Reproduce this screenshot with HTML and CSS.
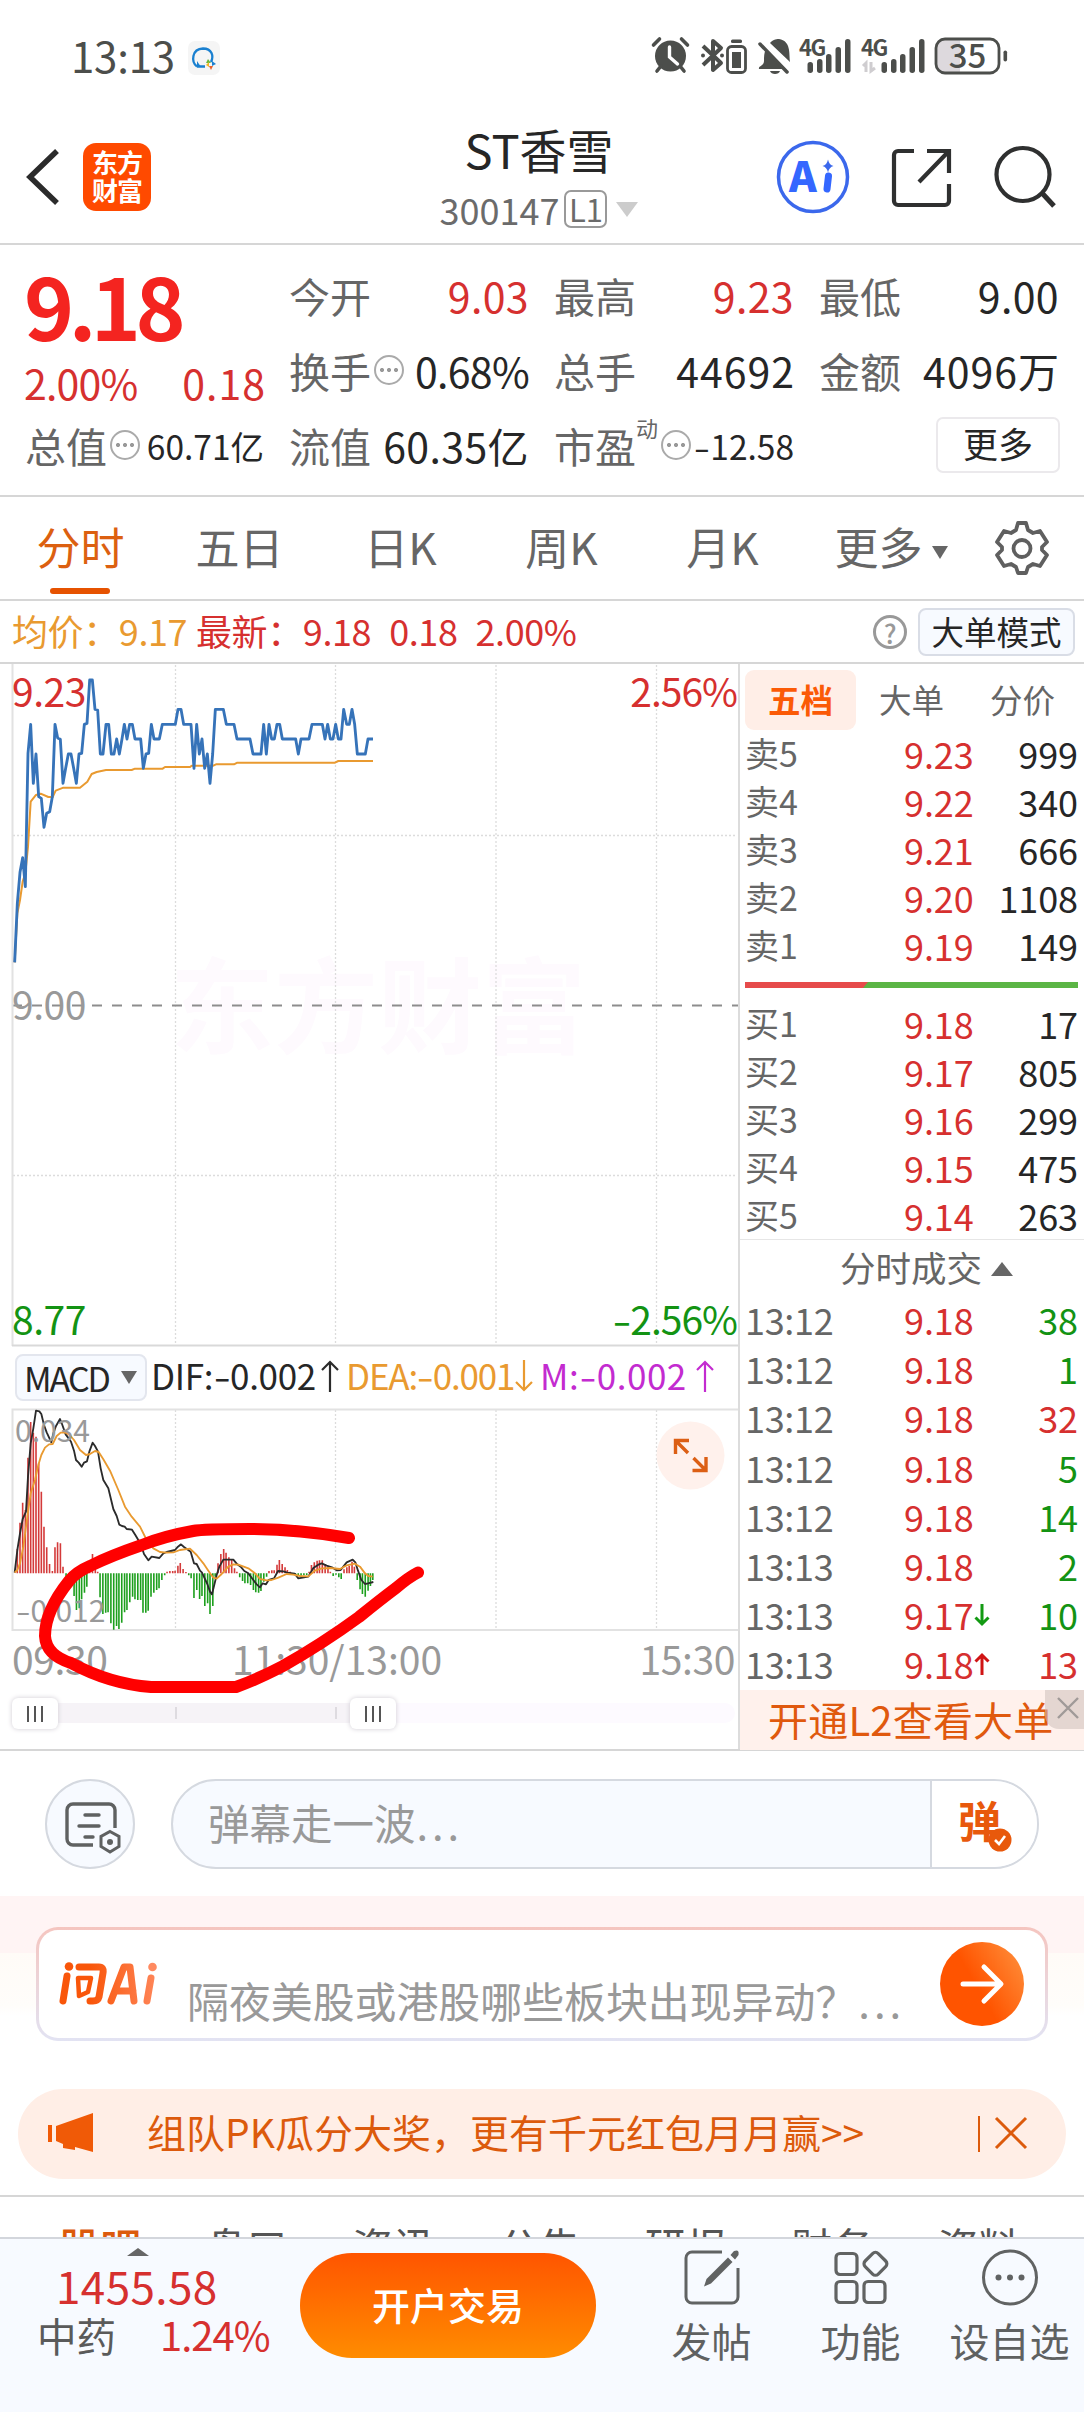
FILE: index.html
```html
<!DOCTYPE html>
<html lang="zh-CN">
<head>
<meta charset="utf-8">
<title>ST香雪 300147</title>
<link rel="stylesheet" href="styles.css">
</head>
<body>
<div class="app">

  <div class="statusbar">
    <span class="clock">13:13</span>
    <span class="chat-badge">
      <svg width="32" height="34" viewBox="0 0 32 34"><path d="M9 25.500 C3 21 3.500 8 15 7.500 C24 7.500 26 15 23 21 M9 25.500 H17" fill="none" stroke="#1a80d0" stroke-width="2.300"/><path d="M9 20v6h4z" fill="#1a80d0"/><path d="M20 18l3 4h-5z" fill="#6dbb3c"/><path d="M18 24l3-3v5z" fill="#f5b621"/><path d="M24 20l4 3-4 2z" fill="#1a80d0"/><path d="M21 25l4 0-2 4z" fill="#e8622a"/></svg>
    </span>
    <svg class="status-icons" width="380" height="46" viewBox="0 0 380 46">
      <g fill="#4c4e4b">
        <circle cx="20.500" cy="25" r="15.500"/>
        <path d="M11 35l-4 5M30 35l4 5M3.500 14l6-6M37.500 14l-6-6" stroke="#4c4e4b" stroke-width="3.600" stroke-linecap="round"/>
        <path d="M19.500 16v10l8 7" fill="none" stroke="#fff" stroke-width="3.400" stroke-linecap="round"/>
        <path d="M53 15l18 17-8 7V10l8 7L53 34" fill="none" stroke="#4c4e4b" stroke-width="4" stroke-linejoin="round"/>
        <circle cx="53" cy="24.500" r="2"/><circle cx="72" cy="24.500" r="2"/>
        <rect x="77.500" y="15.500" width="18" height="26" rx="4" fill="none" stroke="#4c4e4b" stroke-width="2.800"/>
        <rect x="82" y="21" width="9" height="16"/><rect x="81" y="8.500" width="11" height="3.500" rx="1.500"/>
        <path d="M116 18l19 20h-26c-1-3 5-3 5-8 0-5 0-8 2-12zM120 12c3-4 8-4 9-4 12 2 10 14 11 23z"/>
        <path d="M110 13l27 28" stroke="#4c4e4b" stroke-width="3.500" stroke-linecap="round"/><path d="M120 40h10c-1 4-9 4-10 0z"/>
        <rect x="157.500" y="31" width="5.500" height="11" rx="2.700"/><rect x="167" y="28" width="5.500" height="14" rx="2.700"/><rect x="176" y="23" width="5.500" height="19" rx="2.700"/><rect x="185.500" y="16" width="5.500" height="26" rx="2.700"/><rect x="195" y="8" width="5.500" height="34" rx="2.700"/>
        <rect x="231.500" y="31" width="5.500" height="11" rx="2.700"/><rect x="241" y="28" width="5.500" height="14" rx="2.700"/><rect x="250" y="23" width="5.500" height="19" rx="2.700"/><rect x="259.500" y="16" width="5.500" height="26" rx="2.700"/><rect x="269" y="8" width="5.500" height="34" rx="2.700"/>
      </g>
      <path d="M216 41V32l-3 3M221 31v9l4-3" fill="none" stroke="#cfcdd0" stroke-width="3"/>
      <path d="M294 8h16v34h-16a8 8 0 0 1-8-8V16a8 8 0 0 1 8-8z" fill="#ddd9dd"/>
      <rect x="286" y="8" width="63" height="34" rx="9" fill="none" stroke="#4c4e4b" stroke-width="2.800"/>
      <rect x="353.500" y="19.500" width="3.600" height="11" rx="1.800" fill="#4c4e4b"/>
      <text class="st-4g" x="149" y="25">4G</text><text class="st-4g" x="211" y="25">4G</text>
      <text class="st-bat" x="317.500" y="36.500" text-anchor="middle">35</text>
    </svg>
  </div>

  <header class="header">
    <svg class="back" width="40" height="60" viewBox="0 0 40 60"><path d="M36 4L9 30l27 26" fill="none" stroke="#2b2b2b" stroke-width="5.500"/></svg>
    <div class="logo"><span>东方</span><span>财富</span></div>
    <div class="title">
      <div class="name">ST香雪</div>
      <div class="code"><span>300147</span><span class="lv">L1</span><i class="tri-down"></i></div>
    </div>
    <svg class="actions" width="284" height="76" viewBox="0 0 284 76">
      <circle cx="38" cy="38" r="34.500" fill="none" stroke="#3b68ec" stroke-width="3.500"/>
      <path d="M53 20.500q1.200 5.500 5.500 6.500-4.300 1-5.500 6.500-1.200-5.500-5.500-6.500 4.300-1 5.500-6.500z" fill="#3b68ec"/>
      <text class="ai-mark" x="14" y="53">A</text>
      <path d="M53.500 37l-1.500 13" stroke="#3467ff" stroke-width="7" stroke-linecap="round"/>
      <g fill="none" stroke="#2f3030" stroke-width="4.200">
        <path d="M139 12h-16a4 4 0 0 0-4 4v46a4 4 0 0 0 4 4h47a4 4 0 0 0 4-4V45M152 12h22v22M174 12l-30 31"/>
        <circle cx="248" cy="35.500" r="26.500"/><path d="M267 54l12 13" stroke-width="5"/>
      </g>
    </svg>
  </header>

  <section class="stats">
    <div class="quote">
      <div class="price">9.18</div>
      <div class="change"><span>2.00%</span><span class="loose">0.18</span></div>
    </div>
    <div class="cell"><span class="k">今开</span><span class="v red">9.03</span></div>
    <div class="cell"><span class="k">最高</span><span class="v red">9.23</span></div>
    <div class="cell"><span class="k">最低</span><span class="v">9.00</span></div>
    <div class="cell"><span class="k">换手<i class="dots"></i></span><span class="v tight">0.68%</span></div>
    <div class="cell"><span class="k">总手</span><span class="v loose">44692</span></div>
    <div class="cell"><span class="k">金额</span><span class="v loose">4096万</span></div>
    <div class="cell"><span class="k">总值<i class="dots"></i></span><span class="v sm">60.71亿</span></div>
    <div class="cell"><span class="k">流值</span><span class="v">60.35亿</span></div>
    <div class="cell"><span class="k">市盈<sup>动</sup><i class="dots"></i></span><span class="v sm"><i class="neg">-</i>12.58</span></div>
    <div class="cell end"><span class="more">更多</span></div>
  </section>

  <nav class="periods">
    <span class="on">分时</span><span>五日</span><span>日K</span><span>周K</span><span>月K</span><span class="p-more">更多<i class="tri-sm"></i></span>
    <svg width="56" height="56" viewBox="0 0 56 56"><path d="M24 3h8l2 7 5 3 7-2 7 11-5 5v3l5 5-7 11-7-2-5 3-2 6h-8l-2-6-5-3-7 2-7-11 5-5v-3l-5-5 7-11 7 2 5-3z" fill="none" stroke="#5f5f5f" stroke-width="3.800" stroke-linejoin="round"/><circle cx="28" cy="28.500" r="8.500" fill="none" stroke="#5f5f5f" stroke-width="3.800"/></svg>
  </nav>

  <div class="inforow">
    <span class="avg">均价：9.17</span>
    <span class="latest">最新：9.18</span><span class="latest">0.18</span><span class="latest">2.00%</span>
    <span class="help">?</span><span class="mode">大单模式</span>
  </div>

  <main class="board">
    <div class="charts">
      <div class="pricechart">
        <div class="watermark">东方财富</div>
        <svg width="738" height="683" viewBox="0 0 738 683">
          <g stroke="#dcdcdc" stroke-width="1.300" stroke-dasharray="2 2" fill="none">
            <path d="M175.500 1V681M335.500 1V681M496 1V681M656.500 1V681M13 171.500H736M13 511.500H736"/>
          </g>
          <path d="M12 341.500H738" stroke="#8d8d8d" stroke-width="2" stroke-dasharray="10 10"/>
          <path d="M12.500 0V682" stroke="#e2e2e2" stroke-width="2"/>
          <path d="M12 681.500H738" stroke="#d9d9d9" stroke-width="2"/>
          <g transform="translate(0 -4) scale(.33333)" fill="none" stroke-linejoin="round">
            <polyline stroke="#e99a30" stroke-width="6" points="44,907 52,760 60,720 68,665 76,640 84,560 92,425 108,405 122,401 145,411 158,411 167,392 190,383 240,383 262,365 275,342 290,336 318,330 395,330 405,326 488,326 495,321 570,321 575,317 640,317 648,313 702,313 712,308 1005,308 1015,303 1119,303"/>
            <polyline stroke="#3673b9" stroke-width="8.500" points="44,907 52,730 60,637 68,593 76,680 84,280 92,193 100,370 108,282 116,410 124,415 132,502 140,460 149,455 157,410 165,193 173,234 181,238 189,370 197,325 205,282 213,282 221,325 229,370 237,282 245,280 253,193 261,190 269,60 277,60 285,148 293,150 301,282 309,282 318,193 326,193 334,282 342,282 350,237 358,282 366,237 373,193 381,237 389,193 397,193 405,237 422,237 430,325 438,282 446,280 454,193 462,237 478,237 487,193 526,193 534,148 543,148 551,193 573,193 582,325 590,193 598,282 606,237 614,325 622,282 630,370 638,282 646,148 670,148 679,193 702,193 711,237 750,237 759,282 783,282 791,193 799,282 807,193 815,237 823,237 831,193 839,193 847,237 887,237 895,282 903,237 927,237 936,193 967,193 975,237 983,193 991,237 999,237 1007,193 1015,237 1023,237 1031,148 1040,193 1048,193 1056,148 1064,193 1072,282 1096,282 1104,237 1119,237"/>
          </g>
        </svg>
        <span class="lab tl red">9.23</span><span class="lab tr red">2.56%</span>
        <span class="lab ml">9.00</span>
        <span class="lab bl green">8.77</span><span class="lab br green"><i class="neg">-</i>2.56%</span>
      </div>
      <div class="macdbar">
        <span class="picker">MACD<i class="tri-sm"></i></span>
        <span class="dif">DIF:<i class="neg">-</i>0.002</span><svg width="20" height="34" viewBox="0 0 20 34"><path d="M10 33V3M2 11l8-8 8 8" fill="none" stroke="#2b2b2b" stroke-width="2.200"/></svg>
        <span class="dea">DEA:<i class="neg">-</i>0.001</span><svg width="20" height="34" viewBox="0 0 20 34"><path d="M10 1v30M2 23l8 8 8-8" fill="none" stroke="#e99a30" stroke-width="2.200"/></svg>
        <span class="m">M:<i class="neg">-</i>0.002</span><svg width="20" height="34" viewBox="0 0 20 34"><path d="M10 33V3M2 11l8-8 8 8" fill="none" stroke="#c32bd0" stroke-width="2.200"/></svg>
      </div>
      <div class="macdchart">
        <svg width="738" height="227" viewBox="0 0 738 227">
          <path d="M175.500 5V224M335.500 5V224M496 5V224M656.500 5V224" stroke="#dcdcdc" stroke-width="1.300" stroke-dasharray="2 2"/>
          <path d="M738 4.500H12.500V225H738" fill="none" stroke="#e2e2e2" stroke-width="2"/>
          <g transform="translate(0 -15) scale(.4719 .33333)" fill="none" stroke-width="3.400">
            <path stroke="#d43a3a" d="M36.700 550V477M42.400 550V398M48 550V338M53.700 550V360M59.300 550V203M65 550V96M70.600 550V128M76.300 550V140M82 550V220M87.600 550V305M93.200 550V410M99 550V472M105 550V522M111 550V543M116.500 550V472M122 550V457M128 550V460M133.500 550V530M190 550V540M196 550V492M202 550V535M207 550V545M354 550V545M360 550V543M366 550V543M371 550V542M377 550V527M382 550V519M388 550V537M394 550V546M462 550V520M468 550V492M474 550V477M479 550V488M485 550V502M491 550V510M497 550V535M502 550V545M570 550V543M576 550V541M581 550V541M587 550V524M592 550V510M598 550V522M604 550V532M609 550V540M615 550V545M655 550V545M660 550V525M666 550V517M672 550V512M677 550V511M683 550V511M689 550V522M695 550V530M700 550V545M729 550V538M735 550V532M740 550V528M746 550V515M751 550V530"/>
            <path stroke="#1d9f1d" d="M140 550V570M146 550V580M151 550V590M157 550V618M162 550V660M168 550V655M173 550V628M179 550V608M184 550V590M212 550V622M218 550V672M224 550V668M229 550V667M235 550V700M241 550V719M247 550V708M252 550V717M258 550V698M264 550V667M269 550V660M275 550V637M281 550V620M286 550V628M292 550V630M298 550V630M303 550V668M309 550V668M314 550V662M320 550V620M326 550V608M332 550V600M337 550V595M343 550V570M349 550V556M400 550V556M405 550V565M411 550V624M417 550V600M423 550V627M428 550V618M434 550V648M440 550V640M445 550V672M451 550V648M456 550V560M508 550V562M514 550V573M519 550V580M525 550V580M531 550V585M537 550V600M542 550V607M548 550V608M553 550V603M559 550V575M565 550V560M621 550V553M626 550V556M632 550V556M638 550V557M644 550V556M650 550V555M706 550V558M712 550V554M718 550V562M723 550V567M757 550V570M763 550V598M768 550V612M774 550V620M780 550V602M785 550V588M790 550V570"/>
          </g>
          <g transform="translate(0 -5) scale(.33333)" fill="none" stroke-linejoin="round">
            <polyline stroke="#2b2b2b" stroke-width="5.500" points="44,518 52,450 60,400 68,357 78,335 84,230 92,130 100,85 108,32 118,34 124,42 132,75 140,97 154,127 160,100 168,78 180,57 186,72 197,103 206,115 213,125 222,152 228,180 236,188 245,200 252,188 261,184 268,155 278,128 285,138 294,155 302,205 310,240 325,265 340,327 350,348 358,374 366,378 374,380 380,387 396,389 406,405 422,432 432,462 445,481 455,470 478,474 490,460 500,456 525,450 534,440 543,433 552,441 572,455 582,490 590,492 600,512 606,518 622,552 630,575 636,583 650,525 658,500 670,479 700,479 710,491 722,500 733,513 745,520 760,540 770,553 780,562 788,550 798,553 806,540 822,535 834,513 850,514 862,518 884,521 895,535 925,530 940,504 955,494 965,490 980,497 998,503 1010,511 1022,510 1040,487 1058,479 1066,487 1074,512 1084,540 1095,552 1104,550 1120,546"/>
            <polyline stroke="#e99a30" stroke-width="5.500" points="44,518 52,510 60,490 70,440 82,350 92,280 105,240 115,195 124,165 135,143 147,133 158,132 170,108 182,98 195,97 208,104 222,120 240,150 258,165 270,162 285,153 296,156 310,178 330,212 355,270 375,320 395,350 420,380 440,420 460,445 480,456 500,458 520,457 540,450 570,446 590,465 610,490 625,512 640,533 650,536 665,522 685,500 700,493 715,494 745,505 765,520 780,537 800,541 815,540 835,533 860,522 880,524 900,528 925,529 945,512 965,505 990,504 1020,507 1040,496 1065,491 1080,500 1095,520 1105,528 1118,530"/>
          </g>
          <circle cx="690.500" cy="50.500" r="34" fill="#fff1ec"/>
          <path d="M675.500 49V35.500H689M676.500 36.500L688 48M706 52v13.500H692.500M705 64.500L693.500 53" fill="none" stroke="#dc5f14" stroke-width="3.400"/>
        </svg>
        <span class="mlab top">0.034</span><span class="mlab bot"><i class="neg">-</i>0.012</span>
      </div>
      <div class="times"><span>09:30</span><span>11:30/13:00</span><span>15:30</span></div>
      <div class="slider"><div class="track"><div class="range"></div></div><i class="knob k1"></i><i class="knob k2"></i></div>
      <svg class="scribble" width="440" height="190" viewBox="0 0 440 190"><path d="M349 24Q297 15 250 15T193 17Q165 22 142 31Q110 42 90 52Q76 58 69 67Q45 97 45 122Q46 141 71 149Q110 170 151 173H236Q256 166 283 152Q322 130 359 103Q380 86 396 74Q409 63 418 58.500" fill="none" stroke="#f00" stroke-width="12" stroke-linecap="round" stroke-linejoin="round"/></svg>
    </div>

    <aside class="panel">
      <div class="ptabs"><span class="on">五档</span><span>大单</span><span>分价</span></div>
      <div class="rows">
        <div class="row"><span>卖5</span><b>9.23</b><em>999</em></div>
        <div class="row"><span>卖4</span><b>9.22</b><em>340</em></div>
        <div class="row"><span>卖3</span><b>9.21</b><em>666</em></div>
        <div class="row"><span>卖2</span><b>9.20</b><em>1108</em></div>
        <div class="row"><span>卖1</span><b>9.19</b><em>149</em></div>
      </div>
      <div class="ratio"><i></i></div>
      <div class="rows">
        <div class="row"><span>买1</span><b>9.18</b><em>17</em></div>
        <div class="row"><span>买2</span><b>9.17</b><em>805</em></div>
        <div class="row"><span>买3</span><b>9.16</b><em>299</em></div>
        <div class="row"><span>买4</span><b>9.15</b><em>475</em></div>
        <div class="row"><span>买5</span><b>9.14</b><em>263</em></div>
      </div>
      <div class="dealhead">分时成交<i class="tri-up"></i></div>
      <div class="rows deals">
        <div class="row"><span>13:12</span><b>9.18</b><em class="green">38</em></div>
        <div class="row"><span>13:12</span><b>9.18</b><em class="green">1</em></div>
        <div class="row"><span>13:12</span><b>9.18</b><em class="red">32</em></div>
        <div class="row"><span>13:12</span><b>9.18</b><em class="green">5</em></div>
        <div class="row"><span>13:12</span><b>9.18</b><em class="green">14</em></div>
        <div class="row"><span>13:13</span><b>9.18</b><em class="green">2</em></div>
        <div class="row"><span>13:13</span><b>9.17<svg width="16" height="24" viewBox="0 0 16 24"><path d="M8 1v20M1.500 14.500L8 21l6.500-6.500" fill="none" stroke="#139a13" stroke-width="3"/></svg></b><em class="green">10</em></div>
        <div class="row"><span>13:13</span><b>9.18<svg width="16" height="24" viewBox="0 0 16 24"><path d="M8 23V3M1.500 9.500L8 3l6.500 6.500" fill="none" stroke="#d01414" stroke-width="3"/></svg></b><em class="red">13</em></div>
      </div>
      <div class="l2">开通L2查看大单<span class="l2x"><svg width="24" height="24" viewBox="0 0 24 24"><path d="M2 2l20 20M22 2L2 22" stroke="#a09a98" stroke-width="2.400"/></svg></span></div>
    </aside>
  </main>

  <section class="danmu">
    <span class="dm-set"><svg width="56" height="54" viewBox="0 0 56 54"><g fill="none" stroke="#5f6161" stroke-width="3.400"><path d="M28 44H8a6 6 0 0 1-6-6V9a6 6 0 0 1 6-6h36a6 6 0 0 1 6 6V27"/><path d="M20 14h14M14 25h20M20 36h8" stroke-linecap="round"/><path d="M45 30.500l9 5v10l-9 5.500-9-5.500v-10z" stroke-width="3"/></g><circle cx="45" cy="41" r="3" fill="#5f6161"/></svg></span>
    <div class="dm-box"><span class="dm-in">弹幕走一波<i>...</i></span><span class="dm-send">弹<svg width="24" height="24" viewBox="0 0 24 24"><circle cx="12" cy="12" r="11.500" fill="#e8590c"/><path d="M7 12l4 4 6-8" fill="none" stroke="#fff" stroke-width="2.600"/></svg></span></div>
  </section>

  <section class="ask">
    <div class="askcard">
      <svg class="asklogo" width="104" height="48" viewBox="0 0 104 48"><defs><linearGradient id="warm" gradientUnits="userSpaceOnUse" x1="0" y1="0" x2="104" y2="0"><stop offset=".3" stop-color="#f9560a"/><stop offset="1" stop-color="#ff8a60"/></linearGradient></defs>
        <g fill="none" stroke="url(#warm)" stroke-width="7" stroke-linecap="round" stroke-linejoin="round"><path d="M8 16L4 41M20 7h20q5 0 4 6l-4 24q-1 4-6 4h-3"/></g><circle cx="10" cy="6.500" r="4.300" fill="#f9560a"/>
        <path d="M19 18h13l-3 14-9 4z" fill="none" stroke="#f9560a" stroke-width="4.500" stroke-linejoin="round"/>
        <path d="M52 41L65 7h6l4 34M58 31h16" fill="none" stroke="url(#warm)" stroke-width="7" stroke-linejoin="round" stroke-linecap="round"/>
        <path d="M92 18l-4 23" stroke="url(#warm)" stroke-width="7" stroke-linecap="round"/><circle cx="93.500" cy="7" r="4.300" fill="#ff8a60"/></svg>
      <span class="asktext">隔夜美股或港股哪些板块出现异动？<i>...</i></span>
      <span class="askgo"><svg width="48" height="42" viewBox="0 0 48 42"><path d="M5 21h37M26 4l17 17-17 17" fill="none" stroke="#fff" stroke-width="5" stroke-linecap="round" stroke-linejoin="round"/></svg></span>
    </div>
  </section>

  <section class="promo">
    <div class="pill">
      <svg width="48" height="42" viewBox="0 0 48 42"><path d="M1 13h4v17H1zM9 14L46 1v39L28 35v3l-12-2v-4l-7-3z" fill="#f05a07"/></svg>
      <span class="ptext">组队PK瓜分大奖，更有千元红包月月赢&gt;&gt;</span>
      <span class="psep"></span>
      <svg class="px" width="34" height="34" viewBox="0 0 34 34"><path d="M2 2l30 30M32 2L2 32" stroke="#dc5a0c" stroke-width="3"/></svg>
    </div>
  </section>

  <div class="subtabs"><span class="on">股吧</span><span>盘口</span><span>资讯</span><span>公告</span><span>研报</span><span>财务</span><span>资料</span></div>

  <footer class="bottom">
    <div class="index">
      <i class="tri-up sm"></i>
      <div class="idx">1455.58</div>
      <div class="idx2"><span>中药</span><b>1.24%</b></div>
    </div>
    <div class="trade">开户交易</div>
    <div class="tool"><svg width="60" height="58" viewBox="0 0 60 58"><path d="M40 4H10a6 6 0 0 0-6 6v39a6 6 0 0 0 6 6h40a6 6 0 0 0 6-6V20" fill="none" stroke="#616363" stroke-width="3"/><path d="M22 38.500l2.500-7.500L46 9.500l4.500 4.500L29 35.500zM48.500 7l3.500-4q3-1 4 0t.500 4L53 11.500z" fill="#616363"/></svg><span>发帖</span></div>
    <div class="tool"><svg width="60" height="58" viewBox="0 0 60 58"><g fill="none" stroke="#616363" stroke-width="3.200"><rect x="5" y="5.500" width="21" height="21" rx="4"/><rect x="5" y="33.500" width="21" height="21" rx="4"/><rect x="33" y="33.500" width="21" height="21" rx="4"/><rect x="35" y="6.500" width="18.500" height="18.500" rx="4" transform="rotate(45 44.250 16)"/></g></svg><span>功能</span></div>
    <div class="tool"><svg width="60" height="58" viewBox="0 0 60 58"><circle cx="30" cy="29.500" r="26.500" fill="none" stroke="#616363" stroke-width="3"/><g fill="#616363"><circle cx="18.500" cy="29.500" r="3"/><circle cx="30" cy="29.500" r="3"/><circle cx="41.500" cy="29.500" r="3"/></g></svg><span>设自选</span></div>
  </footer>
</div>
</body>
</html>
```

FILE: styles.css
```css
* { box-sizing: border-box; margin: 0; padding: 0; }
body { background: #fff; font-family: "Noto Sans CJK SC", "Noto Sans", sans-serif; color: #262626; }
i, em { font-style: normal; }
b { font-weight: 400; }
svg { display: block; flex: none; }
.app { width: 1084px; height: 2412px; overflow: hidden; background: #fff; white-space: nowrap; }
.red { color: #d6302f; }
.green { color: #139313; }
.neg { display: inline-block; transform: scaleX(1.4); margin: 0 2.500px; }

.statusbar { height: 115px; padding: 31px 54px 0 71px; display: flex; }
.clock { font-size: 42px; line-height: 48px; color: #4c4e4b; letter-spacing: -0.2px; width: 117px; }
.chat-badge { width: 32px; height: 34px; margin-top: 10px; background: #f5f5f5; border-radius: 7px; }
.status-icons { margin-left: auto; }
.st-4g { font: 700 22px "Noto Sans CJK SC", sans-serif; fill: #4c4e4b; letter-spacing: -1.5px; }
.st-bat { font: 500 33px "Noto Sans CJK SC", sans-serif; fill: #4c4e4b; }

.header { height: 130px; border-bottom: 2px solid #d6d6d6; display: flex; align-items: flex-start; padding-left: 21px; }
.back { margin-top: 32px; }
.logo { width: 68px; height: 68px; margin: 28px 0 0 22px; border-radius: 13px; background: #ff4a00; color: #fff; font-size: 26px; font-weight: 700; line-height: 28px; display: flex; flex-direction: column; align-items: center; padding-top: 5px; letter-spacing: -1px; }
.title { width: 390px; margin-left: 193px; display: flex; flex-direction: column; align-items: center; }
.name { font-size: 47px; line-height: 60px; margin-top: 4px; }
.code { font-size: 36px; line-height: 40px; margin-top: 10px; display: flex; align-items: center; color: #6b6b6b; letter-spacing: 0; }
.lv { font-size: 31px; width: 43px; height: 38px; line-height: 34px; border: 2px solid #999; border-radius: 7px; margin-left: 5px; text-align: center; }
.tri-down { margin-left: 9px; border: 11px solid transparent; border-top: 15px solid #ccc; border-bottom: 0; }
.actions { margin: 24px 0 0 41px; }
.ai-mark { font: 900 42px "Noto Sans CJK SC", sans-serif; fill: #3467ff; }

.stats { height: 252px; border-bottom: 2px solid #d6d6d6; padding: 13px 25px 0 26px; display: grid; grid-template-columns: 238px 239px 239px 239px; column-gap: 26px; grid-template-rows: 75px 75px 75px; }
.quote { grid-row: span 2; color: #d6302f; }
.price { font-size: 85px; line-height: 92px; height: 90px; font-weight: 700; color: #f42420; letter-spacing: -5.500px; margin-left: -2px; }
.change { display: flex; justify-content: space-between; font-size: 41px; line-height: 69px; letter-spacing: -0.8px; margin: 0 -1px 0 -2px; }
.cell { display: flex; align-items: center; justify-content: space-between; font-size: 41px; line-height: 75px; }
.cell .k { color: #666; display: flex; align-items: center; margin-left: -1px; }
.cell .v { letter-spacing: 0.4px; }
.cell .tight { letter-spacing: -0.7px; }
.cell .loose, .change .loose { letter-spacing: 1px; margin-right: -1px; }
.cell .sm { font-size: 33.500px; letter-spacing: 0; }
.cell.end { justify-content: flex-end; align-items: flex-start; }
.cell sup { font-size: 22px; line-height: 24px; align-self: flex-start; margin-top: 7px; }
.dots { width: 30px; height: 30px; border: 2px solid #aaa; border-radius: 50%; margin: 0 0 1px 3px; background: radial-gradient(circle at 6px 13px, #999 1.8px, transparent 2.300px), radial-gradient(circle at 13px 13px, #999 1.8px, transparent 2.300px), radial-gradient(circle at 20px 13px, #999 1.8px, transparent 2.300px); }
.more { width: 124px; height: 56px; line-height: 48px; border: 2px solid #ebe9ec; border-radius: 7px; text-align: center; font-size: 35px; margin: 9px -1px 0 0; }

.periods { height: 104px; border-bottom: 2px solid #d6d6d6; display: flex; align-items: center; font-size: 44px; color: #666; line-height: 60px; }
.periods span { width: 161px; text-align: center; margin-bottom: 4px; position: relative; left: -2px; }
.periods .on { color: #dc6010; left: 0; }
.periods .on::after { content: ""; position: absolute; left: 50px; bottom: -18px; width: 60px; height: 6px; border-radius: 3px; background: #e65200; }
.periods .p-more { width: 172px; padding-left: 4px; }
.periods svg { margin: 0 0 0 17px; }
.tri-sm { display: inline-block; border: 8px solid transparent; border-top: 13px solid #666; border-bottom: 0; margin-left: 9px; vertical-align: 6px; }

.inforow { height: 63px; border-bottom: 2px solid #d6d6d6; display: flex; align-items: center; padding-left: 12px; font-size: 36px; line-height: 60px; letter-spacing: -0.4px; }
.avg, .latest { margin-bottom: 3px; }
.avg { color: #e99a30; width: 184px; }
.latest { color: #d6302f; margin-right: 18px; }
.help { margin-left: auto; width: 34px; height: 34px; line-height: 29px; border: 3px solid #999; border-radius: 50%; color: #999; font-size: 26px; text-align: center; font-weight: 500; }
.mode { margin: 0 9px 0 11px; width: 157px; height: 48px; line-height: 42px; background: #f7faff; border: 2px solid #d9dde6; border-radius: 8px; font-size: 32.500px; text-align: center; letter-spacing: 0; }

.board { height: 1087px; display: flex; border-bottom: 2px solid #d6d6d6; }
.charts { width: 738px; position: relative; }
.pricechart { height: 683px; position: relative; }
.watermark { position: absolute; left: 170px; top: 262px; font-size: 104px; line-height: 150px; font-weight: 700; color: #fefafe; }
.pricechart svg { position: relative; }
.lab { position: absolute; font-size: 39px; line-height: 40px; letter-spacing: -0.5px; }
.lab.tl { left: 12px; top: 6px; }
.lab.tr { right: 1px; top: 6px; letter-spacing: -1px; }
.lab.ml { left: 12px; top: 319px; color: #999; }
.lab.bl { left: 12px; top: 634px; }
.lab.br { right: 1px; top: 634px; letter-spacing: -1px; }
.macdbar { height: 58px; padding: 7px 0 0 15px; display: flex; align-items: flex-start; font-size: 35px; line-height: 41px; }
.macdbar svg { margin: 5px 6px 0 6px; }
.picker { width: 132px; height: 47px; background: #f7faff; border: 2px solid #e3e6ee; border-radius: 8px; padding-left: 7px; margin-right: 4px; line-height: 39px; letter-spacing: -2px; display: flex; align-items: center; font-size: 34px; }
.picker .tri-sm { margin-left: 12px; }
.dif { width: 163px; letter-spacing: -0.3px; }
.dea { width: 162px; letter-spacing: -1.200px; color: #e99a30; }
.m { width: 149px; color: #c32bd0; letter-spacing: 0.5px; }
.macdchart { height: 227px; position: relative; }
.mlab { position: absolute; left: 15px; font-size: 30px; line-height: 32px; color: #999; letter-spacing: 0; }
.mlab.top { top: 8px; }
.mlab.bot { top: 188px; }
.times { height: 60px; padding: 0 3px 0 12px; display: flex; justify-content: space-between; font-size: 39px; line-height: 52px; color: #999; letter-spacing: -0.4px; }
.times span:nth-child(2) { margin-right: 73px; letter-spacing: 0; }
.slider { height: 50px; padding: 11px 3px 0 12px; position: relative; }
.track { height: 20px; border-radius: 10px; background: #fdfaff; }
.range { height: 20px; width: 361px; background: linear-gradient(90deg, transparent 163px, #dedbe0 163px, #dedbe0 165px, transparent 165px, transparent 323px, #dedbe0 323px, #dedbe0 325px, transparent 325px) 0 4px / 100% 12px no-repeat #f6f3f7; }
.knob { position: absolute; top: 6px; width: 46px; height: 31px; border-radius: 6px; background: linear-gradient(90deg, #555 2px, transparent 2px, transparent 7px, #555 7px, #555 9px, transparent 9px, transparent 14px, #555 14px) center / 16px 16px no-repeat #fff; box-shadow: 0 0 5px #cfcbd3; }
.k1 { left: 12px; }
.k2 { left: 350px; }
.scribble { position: absolute; left: 0; top: 850px; }

.panel { width: 346px; border-left: 2px solid #dcdcdc; }
.ptabs { height: 66px; padding: 6px 0 0 5px; display: flex; font-size: 32.500px; line-height: 57px; color: #666; }
.ptabs span { width: 111px; height: 60px; text-align: center; }
.ptabs .on { background: #ffeee7; border-radius: 9px; color: #fb5a06; font-weight: 700; }
.ptabs + .rows { margin-top: -1px; }
.row { height: 48px; line-height: 48px; padding: 0 6px 0 5px; display: grid; grid-template-columns: 159px 70px 1fr; font-size: 36px; letter-spacing: -0.1px; }
.row span { color: #666; font-size: 34px; }
.row b { color: #d6302f; display: flex; align-items: center; }
.row em { text-align: right; }
.deals .row { height: 49.200px; line-height: 49.200px; }
.deals .row span { font-size: 36px; letter-spacing: -0.3px; }
.ratio { height: 6px; margin: 13px 6px 11px 5px; background: #5bb545; }
.ratio i { display: block; width: 123px; height: 6px; background: #e64b4b; clip-path: polygon(0 0, 100% 0, 118px 100%, 0 100%); }
.dealhead { height: 56px; border-top: 1px solid #e6e6e6; font-size: 35.500px; line-height: 54px; color: #666; padding-left: 100px; }
.tri-up { display: inline-block; border: 11px solid transparent; border-bottom: 14px solid #666; border-top: 0; margin-left: 9px; vertical-align: 6px; }
.l2 { height: 60px; margin-top: 1px; background: #fff1ec; color: #e0590e; font-size: 40px; line-height: 58px; padding-left: 28px; position: relative; letter-spacing: 0.2px; }
.l2x { position: absolute; right: 0; top: 0; width: 39px; height: 39px; background: rgba(205, 192, 188, .55); border-bottom-left-radius: 14px; padding: 6px 0 0 11px; }

.danmu { height: 145px; padding: 28px 45px 0 45px; display: flex; gap: 36px; }
.dm-set { width: 90px; height: 90px; border-radius: 50%; border: 2px solid #d5d9e0; background: #f7faff; padding: 20px 0 0 18px; }
.dm-box { flex: 1; height: 90px; border: 2px solid #d5d9e0; border-radius: 45px; background: #f7faff; display: flex; overflow: hidden; }
.dm-in { flex: 1; padding-left: 35px; font-size: 41.500px; line-height: 82px; color: #999; }
.dm-in i, .asktext i { letter-spacing: 4px; margin-left: 1px; }
.dm-send { width: 107px; background: #fff; border-left: 2px solid #d5d9e0; color: #e8590c; font-weight: 700; font-size: 43px; line-height: 76px; padding-left: 26px; position: relative; }
.dm-send svg { position: absolute; left: 56px; top: 47px; }

.ask { height: 181px; padding: 31px 36px 0; background: linear-gradient(#fff4f4 0, #fff4f4 57px, #fffbf7 57px, #fffdfa 110px, #fff 120px); }
.askcard { height: 114px; border: 3px solid transparent; border-radius: 22px; background: linear-gradient(#fff, #fff) padding-box, linear-gradient(#f5c5bf, #e2e3f3) border-box; display: flex; }
.asklogo { margin: 30px 0 0 20px; }
.asktext { margin-left: 24px; font-size: 41.900px; line-height: 60px; margin-top: 40px; color: #999; flex: 1; }
.asktext i { margin-left: 1px; }
.askgo { width: 84px; height: 84px; margin: 12px 21px 0 0; border-radius: 50%; background: linear-gradient(60deg, #ff5400 45%, #ff9440); padding: 21px 0 0 18px; }

.promo { height: 120px; padding: 12px 18px 0; border-bottom: 2px solid #d6d6d6; }
.pill { height: 90px; border-radius: 45px; background: #ffeee6; display: flex; align-items: center; padding-left: 29px; color: #dc5a0c; font-size: 39px; line-height: 82px; }
.pill > svg { margin-bottom: 2px; }
.ptext { margin-left: 52px; width: 784px; padding-bottom: 7px; }
.psep { width: 1.500px; height: 36px; background: #dc5a0c; margin-left: 47px; }
.pill > .px { margin: 0 0 2px 14px; }

.subtabs { height: 40px; padding: 18px 0 0 27px; display: flex; font-size: 41px; line-height: 60px; overflow: hidden; color: #555; }
.subtabs span { width: 146.400px; text-align: center; }
.subtabs .on { color: #dc5a0c; font-weight: 500; }

.bottom { height: 176px; background: #f7faff; border-top: 2px solid #d3d6dc; display: flex; position: relative; }
.index { width: 300px; padding-left: 37px; }
.tri-up.sm { display: block; width: 0; margin: 9px 0 0 90px; border-width: 0 11px 8px; }
.idx { font-size: 44px; line-height: 50px; margin: 4px 0 0 19px; color: #d6302f; letter-spacing: 0.4px; }
.idx2 { font-size: 39.500px; line-height: 49px; display: flex; color: #5a5a5a; }
.idx2 b { margin-left: 44px; color: #d6302f; letter-spacing: -1px; font-size: 40px; }
.trade { width: 296px; height: 105px; margin-top: 14px; border-radius: 52px; background: linear-gradient(#ff5500, #ff8c00); color: #fff; font-weight: 500; font-size: 38px; line-height: 101px; text-align: center; }
.tool { width: 149px; margin-top: 9px; display: flex; flex-direction: column; align-items: center; color: #5f6161; font-size: 40px; }
.tool span { line-height: 56px; margin-top: 6px; }
.trade + .tool { margin-left: 41px; }
```
